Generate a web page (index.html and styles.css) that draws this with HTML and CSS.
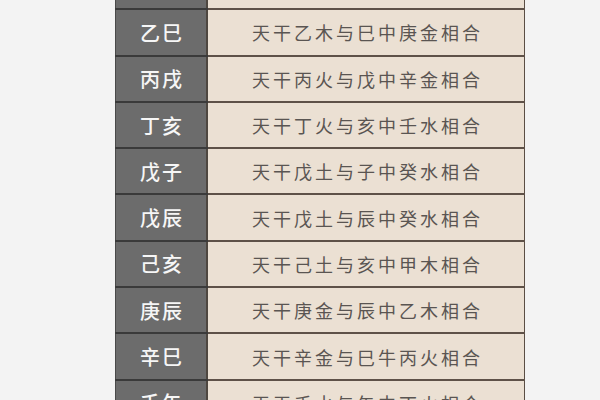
FILE: index.html
```html
<!DOCTYPE html>
<html lang="zh">
<head>
<meta charset="utf-8">
<link rel="stylesheet" href="styles.css">
</head>
<body>
<div class="page">
<table class="hehua">
<tr><td class="gz"></td><td class="desc"></td></tr>
<tr><td class="gz">乙巳</td><td class="desc">天干乙木与巳中庚金相合</td></tr>
<tr><td class="gz">丙戌</td><td class="desc">天干丙火与戊中辛金相合</td></tr>
<tr><td class="gz">丁亥</td><td class="desc">天干丁火与亥中壬水相合</td></tr>
<tr><td class="gz">戊子</td><td class="desc">天干戊土与子中癸水相合</td></tr>
<tr><td class="gz">戊辰</td><td class="desc">天干戊土与辰中癸水相合</td></tr>
<tr><td class="gz">己亥</td><td class="desc">天干己土与亥中甲木相合</td></tr>
<tr><td class="gz">庚辰</td><td class="desc">天干庚金与辰中乙木相合</td></tr>
<tr><td class="gz">辛巳</td><td class="desc">天干辛金与巳牛丙火相合</td></tr>
<tr><td class="gz">壬午</td><td class="desc">天干壬水与午中丁火相合</td></tr>
</table>
</div>
</body>
</html>
```
FILE: styles.css
```css
html, body {
  margin: 0;
  padding: 0;
  background: #f3f3f3;
  overflow: hidden;
}
.page {
  width: 600px;
  height: 400px;
  overflow: hidden;
}
.hehua {
  border-collapse: collapse;
  margin: -37px 0 0 115px;
  width: 410px;
  font-family: "Noto Sans CJK SC", "Noto Sans", sans-serif;
  border-left: 1px solid #4a4a4a;
  border-right: 1px solid #5a4e44;
}
.hehua tr {
  height: 46.3px;
}
.hehua td {
  border-bottom: 2px solid #5e5148;
  padding: 0;
  text-align: center;
  vertical-align: middle;
}
.gz {
  width: 90px;
  background: #6c6c6c;
  color: #f6f6f6;
  font-size: 20px;
  font-weight: 500;
  letter-spacing: 2px;
  text-indent: 2px;
  border-right: 2px solid #4e4740;
  border-bottom-color: #3a3a3a !important;
}
.desc {
  background: #ebe0d3;
  color: #5a5552;
  font-size: 18px;
  letter-spacing: 3px;
  text-indent: 3px;
}
```
